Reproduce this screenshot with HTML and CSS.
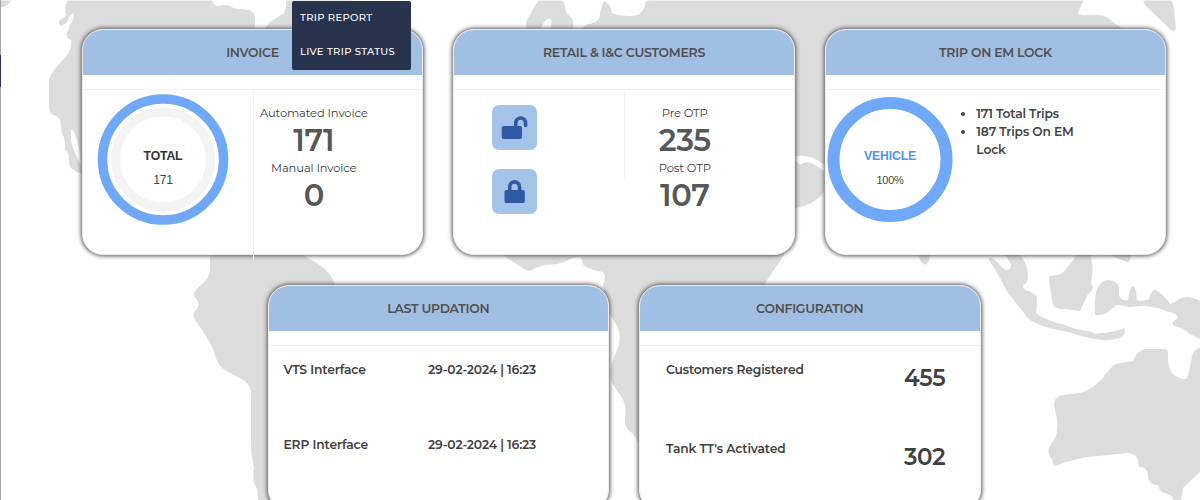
FILE: index.html
```html
<!DOCTYPE html>
<html lang="en">
<head>
<meta charset="utf-8">
<title>Trip Dashboard</title>
<link rel="stylesheet" href="styles.css">
</head>
<body>
<svg class="map" viewBox="0 0 1200 500" aria-hidden="true">
  <path d="M0 0H12Q8 6 0 8Z"/>
  <path d="M68 0H212Q213 6 219 6Q226 4 230 6Q235 10 241 9L249 10Q256 12 255 20V40H261Q264 28 270 22L284 13Q287 8 286 0H352L300 60H100L84 173Q78 174 74 170Q69 168 69 160Q69 152 65 150Q66 140 62 134Q61 127 60 120Q58 116 53 115Q49 113 49 105V80Q50 75 54 70L68 54Q72 48 71 40Q65 38 67 32Q70 30 69 26Q75 18 74 13Q69 15 68 20Q65 26 60 25Q57 22 61 19Q66 18 66 14Q64 6 68 0ZM71 129Q75 130 79 148L81 164Q73 152 71 140Z" fill-rule="evenodd"/>
  <path d="M210 245V268C210 284 195 285 194 295C196 300 201 301 197 309C190 315 195 320 200 327C209 340 212 345 215 355C219 370 229 372 238 377C246 381 251 385 251 393V445Q251 456 254 468Q252 480 255 485Q258 489 258 500H285V300H337Q337 280 325 269Q316 262 306 257L280 240Z"/>
  <path d="M539 0H562Q565 3 565 8C565 15 574 16 573 23Q574 28 570 35H550Q552 25 551 19Q546 16 541 28L527 30Q524 22 530 15Q535 5 539 0Z"/>
  <path d="M582 30Q584 25 589 24Q601 22 600 13Q602 5 604 1Q611 4 612 13Q620 16 630 16Q642 17 645 5Q646 0 650 0H1084Q1080 7 1078 13Q1080 16 1088 15Q1100 14 1107 17L1122 29L1090 70H826V166Q812 154 797 156H780V162H797Q800 167 803 163Q810 160 824 171V192Q814 205 796 208L780 220L784 255L765 283V300L700 470L640 446Q635 434 628 430Q624 426 625 418Q627 406 622 398L612 383Q608 370 614 357Q624 338 617 326L607 310L603 284Q607 277 603 272Q589 270 583 265L581 257Q578 256 570 259C560 265 555 264 545 265Q534 268 530 271Q524 270 515 263L500 253V190H600V60Z"/>
  <path d="M1143 0H1170Q1174 3 1174 10L1176 29Q1175 32 1171 30L1150 10Q1145 7 1143 0Z"/>
  <path d="M919 250Q918 262 925 265Q931 262 930 250Z"/>
  <path d="M989 258Q992 257 998 263Q1002 268 1006 270Q1012 270 1011 264L1002 250H1016Q1026 260 1028 273Q1028 282 1025 284Q1021 285 1025 290Q1035 293 1037 297Q1037 306 1036 313Q1047 321 1065 325Q1080 331 1090 331Q1094 335 1100 333Q1113 333 1124 328Q1127 335 1119 338Q1108 342 1095 339Q1080 336 1068 332Q1046 328 1038 324Q1027 320 1024 313Q1015 302 1006 290Q1002 281 996 271L989 260Z"/>
  <path d="M1050 276C1060 275 1062 274 1066 269L1078 254H1090Q1094 267 1092 275Q1090 282 1093 287Q1093 291 1088 294Q1084 303 1080 311L1065 309Q1055 309 1053 305Q1050 290 1049 278Z"/>
  <path d="M1110 255L1127 262Q1132 262 1130 250H1105Z"/>
  <path d="M1095 314Q1094 302 1096 292Q1100 280 1108 280Q1117 280 1119 288V296Q1124 302 1128 300Q1130 285 1133 286Q1136 287 1137 300Q1142 302 1149 299Q1152 288 1156 290Q1164 295 1170 304Q1175 303 1179 299Q1188 294 1200 301V339Q1196 337 1190 334Q1183 327 1174 326Q1170 323 1178 318Q1177 313 1169 312Q1156 306 1143 306L1129 307Q1121 305 1117 305Q1111 309 1108 312Q1100 316 1096 315Z"/>
  <path d="M1054 405Q1054 397 1062 395L1080 393Q1092 390 1102 379Q1110 367 1116 364Q1126 362 1133 361Q1137 351 1145 349L1165 349Q1169 350 1168 358Q1168 370 1174 375Q1183 381 1187 378Q1190 368 1192 357Q1194 348 1200 348V472L1183 488L1181 500H1173Q1173 496 1168 494Q1160 493 1158 485Q1147 485 1148 474Q1147 468 1140 467Q1138 466 1138 460Q1136 453 1127 453Q1110 455 1088 457Q1070 460 1055 466Q1053 466 1052 459Q1047 454 1049 448L1056 436Q1059 425 1056 414Z"/>
  <rect class="top-edge" width="1200" height="1"/>
</svg>
<div class="rail"></div>
<main class="board">
  <section class="card">
    <h2 class="card-title">INVOICE</h2>
    <div class="card-body split-invoice">
      <div class="chart-cell">
        <svg class="donut" width="132" height="132" viewBox="0 0 132 132">
          <circle class="ring" cx="66" cy="65.5" r="60.5" stroke-width="9.5"/>
          <circle class="ring-muted" cx="66" cy="65.5" r="47.5" stroke-width="9"/>
          <text class="donut-label" x="66" y="65.5">TOTAL</text>
          <text class="donut-value" x="66" y="90">171</text>
        </svg>
      </div>
      <div class="stats stats-invoice">
        <p class="stat-label">Automated Invoice</p>
        <p class="stat-value">171</p>
        <p class="stat-label">Manual Invoice</p>
        <p class="stat-value">0</p>
      </div>
    </div>
  </section>
  <section class="card">
    <h2 class="card-title">RETAIL &amp; I&amp;C CUSTOMERS</h2>
    <div class="card-body split-even">
      <div class="locks">
        <span class="lock-tile"><svg width="45" height="45" viewBox="0 0 45 45"><rect x="9.7" y="21" width="20.3" height="13" rx="2"/><path d="M23.8 21.5V18.2a4.9 5.2 0 0 1 9.8 0V20.5" /></svg></span>
        <span class="lock-tile"><svg width="45" height="45" viewBox="0 0 45 45"><rect x="12.5" y="21" width="20.3" height="13" rx="2"/><path d="M17.7 21.5V17.9a4.9 5 0 0 1 9.8 0V21.5"/></svg></span>
      </div>
      <div class="stats stats-otp">
        <p class="stat-label">Pre OTP</p>
        <p class="stat-value">235</p>
        <p class="stat-label">Post OTP</p>
        <p class="stat-value">107</p>
      </div>
    </div>
  </section>
  <section class="card">
    <h2 class="card-title">TRIP ON EM LOCK</h2>
    <div class="card-body split-trip">
      <svg class="donut" width="130" height="132" viewBox="0 0 130 132">
        <circle class="ring" cx="65" cy="65.5" r="56.5" stroke-width="12"/>
        <text class="donut-label accent" x="65" y="65.5">VEHICLE</text>
        <text class="donut-value small" x="65" y="90">100%</text>
      </svg>
      <ul class="trips">
        <li>171 Total Trips</li>
        <li>187 Trips On EM Lock</li>
      </ul>
    </div>
  </section>
  <section class="card">
    <h2 class="card-title">LAST UPDATION</h2>
    <dl class="card-body updates">
      <dt>VTS Interface</dt><dd>29-02-2024 | 16:23</dd>
      <dt>ERP Interface</dt><dd>29-02-2024 | 16:23</dd>
    </dl>
  </section>
  <section class="card">
    <h2 class="card-title">CONFIGURATION</h2>
    <dl class="card-body config">
      <dt>Customers Registered</dt><dd>455</dd>
      <dt>Tank TT's Activated</dt><dd>302</dd>
    </dl>
  </section>
</main>
<nav class="menu">
  <a class="menu-item">TRIP REPORT</a>
  <a class="menu-item">LIVE TRIP STATUS</a>
</nav>
</body>
</html>
```
FILE: styles.css
```css
* { box-sizing: border-box; }
body {
  margin: 0;
  width: 1200px;
  height: 500px;
  overflow: hidden;
  position: relative;
  background: #fff;
  color: #444;
  font-family: Montserrat, Inter, sans-serif;
}
p, h2, dl, dd, ul { margin: 0; padding: 0; }
.map { position: absolute; left: 0; top: 0; width: 1200px; height: 500px; fill: #dcdcdc; }
.map .top-edge { fill: #fff; opacity: .5; }
.rail {
  position: absolute; left: 0; top: 0; width: 1px; height: 500px;
  background: linear-gradient(#a5a5a5 55px, #26324b 55px, #26324b 87px, #a5a5a5 87px);
}
.board {
  position: relative;
  display: flex;
  flex-wrap: wrap;
  justify-content: center;
  gap: 30px;
  padding: 29px 33.7px 0 81.7px;
}
.card {
  width: 341.5px;
  height: 226px;
  border: 1px solid #ececec;
  border-radius: 21px;
  background: #fff;
  box-shadow: 0 0 4px 1px #555;
}
.card-title {
  height: 45px;
  line-height: 45px;
  border-radius: 20px 20px 0 0;
  background: #a1bee3;
  text-align: center;
  font-size: 12.5px;
  font-weight: 600;
  letter-spacing: -.28px;
  color: #505050;
}
.card-body { margin-top: 14px; border-top: 1px solid #f2f2f2; }
.split-invoice { display: grid; grid-template-columns: 171px 1fr; height: 172px; }
.chart-cell { border-right: 1px solid #f2f2f2; padding: 4px 0 0 14px; }
.donut { display: block; overflow: visible; }
.donut circle { fill: none; }
.ring { stroke: #6ea8f7; }
.ring-muted { stroke: #f3f3f3; }
.donut text { text-anchor: middle; font-family: "Liberation Sans", sans-serif; }
.donut-label { font-size: 12.3px; font-weight: 700; fill: #333; letter-spacing: -.2px; }
.donut-label.accent { fill: #5094ef; }
.donut-value { font-size: 12.2px; fill: #444; letter-spacing: -.3px; }
.donut-value.small { font-size: 11px; letter-spacing: -.3px; }
.stats { text-align: center; padding-top: 14px; }
.stats-invoice { width: 120px; }
.stat-label { font-size: 11.5px; line-height: 19px; letter-spacing: -.12px; color: #3c3c3c; }
.stat-value { position: relative; top: -1px; font-size: 30.5px; line-height: 36px; font-weight: 600; letter-spacing: -.4px; color: #575757; }
.split-even { display: grid; grid-template-columns: 170px 120px; }
.locks { display: grid; gap: 19px; padding: 15px 0 0 37.5px; align-content: start; }
.lock-tile { width: 45px; height: 45px; border-radius: 7px; background: #a5c3e9; }
.lock-tile svg { display: block; fill: #2d5aa3; }
.lock-tile path { fill: none; stroke: #2d5aa3; stroke-width: 3.6; stroke-linecap: round; }
.stats-otp { height: 91px; border-left: 1px solid #f2f2f2; }
.split-trip { display: flex; padding-top: 4px; }
.split-trip .donut { margin-left: -.5px; }
.trips {
  width: 125px; padding: 11px 0 0 21px;
  font-size: 12.3px; font-weight: 600; line-height: 18px; letter-spacing: -.16px;
}
.updates, .config { display: grid; font-size: 12.3px; font-weight: 600; letter-spacing: -.14px; color: #414141; }
.updates { grid-template-columns: 144.5px 1fr; grid-auto-rows: 75px; padding: 14px 15px 0; line-height: 20px; }
.config { grid-template-columns: 1fr auto; grid-auto-rows: 79px; padding: 14px 34px 0 26px; line-height: 20px; }
.config dd { font-size: 23px; line-height: 36px; letter-spacing: -.26px; }
.menu {
  position: absolute; left: 292px; top: 1px; width: 119px; height: 69px;
  border-radius: 2px; background: #28344e;
}
.menu-item {
  display: block; padding-left: 8px; line-height: 33.5px;
  font-size: 10px; font-weight: 500; letter-spacing: .33px; color: #fff;
}
```
